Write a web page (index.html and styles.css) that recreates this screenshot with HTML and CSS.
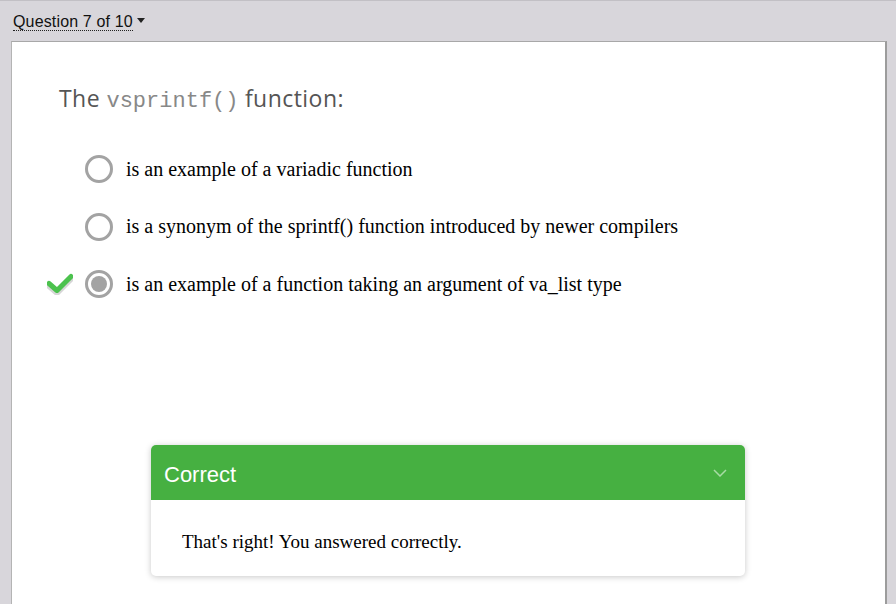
FILE: index.html
```html
<!DOCTYPE html>
<html>
<head>
<meta charset="utf-8">
<link rel="stylesheet" href="styles.css">
</head>
<body>
<div class="page">
  <div class="topbar">
    <span class="qnav">Question 7 of 10</span><span class="caret"></span>
  </div>
  <div class="panel">
    <h1 class="question">The <code class="mono">vsprintf()</code> function:</h1>
    <ul class="options">
      <li class="option">
        <span class="mark"></span>
        <span class="radio"></span>
        <span class="label">is an example of a variadic function</span>
      </li>
      <li class="option">
        <span class="mark"></span>
        <span class="radio"></span>
        <span class="label">is a synonym of the sprintf() function introduced by newer compilers</span>
      </li>
      <li class="option">
        <span class="mark">
          <svg width="26" height="22" viewBox="0 0 26 22">
            <path d="M2 12 L10 19 L24 5" fill="none" stroke="#d6d6d6" stroke-width="5" stroke-linecap="round" stroke-linejoin="round" transform="translate(0,1.5)"/>
            <path d="M2 10.5 L10 17.5 L24 3.5" fill="none" stroke="#4cc24e" stroke-width="5" stroke-linecap="round" stroke-linejoin="round"/>
          </svg>
        </span>
        <span class="radio checked"></span>
        <span class="label">is an example of a function taking an argument of va_list type</span>
      </li>
    </ul>
    <div class="feedback">
      <div class="fb-head">
        <span class="fb-title">Correct</span>
        <svg class="chev" width="14" height="8" viewBox="0 0 14 8"><path d="M1 1 L7 7 L13 1" fill="none" stroke="#a8dca5" stroke-width="1.5"/></svg>
      </div>
      <div class="fb-body">That's right! You answered correctly.</div>
    </div>
  </div>
</div>
</body>
</html>
```
FILE: styles.css
```css
html, body {
  margin: 0;
  padding: 0;
}
body {
  background: #d8d6db;
  width: 896px;
  height: 604px;
  overflow: hidden;
}
.page {
  border-top: 1px solid #c2c0c5;
  display: flex;
  flex-direction: column;
  height: 603px;
}
.topbar {
  height: 40px;
  padding-left: 13px;
  display: flex;
  align-items: center;
  font-family: "Liberation Sans", Arial, sans-serif;
  font-size: 16px;
  letter-spacing: 0.15px;
  color: #111;
}
.qnav {
  border-bottom: 1px dotted #222;
  line-height: 17px;
  margin-top: 1px;
}
.caret {
  display: inline-block;
  width: 0;
  height: 0;
  border-left: 4.5px solid transparent;
  border-right: 4.5px solid transparent;
  border-top: 5px solid #222;
  margin-left: 4px;
  margin-top: -1px;
}
.panel {
  flex: 1;
  margin-left: 11px;
  width: 873px;
  background: #fff;
  border-top: 1px solid #a8a8a8;
  border-left: 1px solid #b4b4b4;
  border-right: 2px solid #9c9c9c;
  display: flex;
  flex-direction: column;
}
.question {
  margin: 42px 0 0 47px;
  font-family: "Open Sans", sans-serif;
  font-weight: normal;
  font-size: 23px;
  color: #555;
  line-height: 28px;
  letter-spacing: 0.45px;
}
.mono {
  font-family: "Liberation Mono", "Courier New", monospace;
  font-size: 22px;
  letter-spacing: 0;
  color: #888;
}
.options {
  list-style: none;
  margin: 39px 0 0 0;
  padding: 0;
  display: flex;
  flex-direction: column;
  gap: 29.5px;
}
.option {
  display: flex;
  align-items: center;
  height: 28px;
}
.mark {
  width: 26px;
  margin-left: 35px;
  display: flex;
  align-items: center;
  height: 22px;
}
.radio {
  box-sizing: border-box;
  width: 28px;
  height: 28px;
  border-radius: 50%;
  border: 3px solid #a3a3a3;
  margin-left: 12px;
  position: relative;
  background: #fff;
}
.radio.checked::after {
  content: "";
  position: absolute;
  left: 3px;
  top: 3px;
  width: 16px;
  height: 16px;
  border-radius: 50%;
  background: #a3a3a3;
}
.label {
  margin-left: 13px;
  font-family: "Liberation Serif", "Times New Roman", serif;
  font-size: 20px;
  color: #000;
}
.feedback {
  margin: 147px 0 0 139px;
  width: 594px;
  border-radius: 5px;
  background: #fff;
  box-shadow: 0 1px 6px rgba(0,0,0,0.22);
  overflow: hidden;
}
.fb-head {
  background: #46b041;
  height: 55px;
  display: flex;
  align-items: center;
  justify-content: space-between;
  padding: 0 18px 0 13px;
}
.fb-title {
  font-family: "Liberation Sans", Arial, sans-serif;
  font-size: 22px;
  color: #fff;
  margin-top: 5px;
}
.chev {
  display: block;
}
.fb-body {
  padding: 30px 31px 22px 31px;
  font-family: "Liberation Serif", "Times New Roman", serif;
  font-size: 19px;
  color: #000;
  line-height: 24px;
}
```
